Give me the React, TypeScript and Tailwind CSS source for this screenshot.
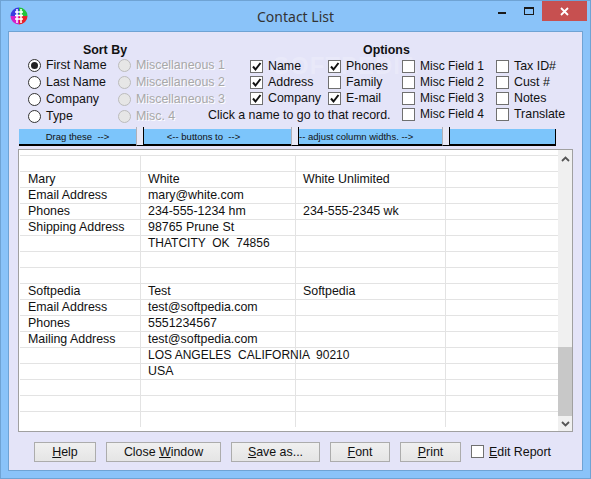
const font = "font-['Liberation_Sans',Arial,sans-serif]";

const rows = [
  ['', '', ''],
  ['Mary', 'White', 'White Unlimited'],
  ['Email Address', 'mary@white.com', ''],
  ['Phones', '234-555-1234 hm', '234-555-2345 wk'],
  ['Shipping Address', '98765 Prune St', ''],
  ['', 'THATCITY  OK  74856', ''],
  ['', '', ''],
  ['', '', ''],
  ['Softpedia', 'Test', 'Softpedia'],
  ['Email Address', 'test@softpedia.com', ''],
  ['Phones', '5551234567', ''],
  ['Mailing Address', 'test@softpedia.com', ''],
  ['', 'LOS ANGELES  CALIFORNIA  90210', ''],
  ['', 'USA', ''],
  ['', '', ''],
  ['', '', ''],
  ['', '', ''],
];

const Radio = ({ label, checked, disabled }: { label: string; checked?: boolean; disabled?: boolean }) => (
  <div className="flex h-[17px] items-center gap-[5px]">
    <span
      className={`flex h-[13px] w-[13px] items-center justify-center rounded-full border ${
        disabled ? 'border-[#bcbcbc] bg-[#e6e6e6]' : 'border-[#333] bg-white'
      }`}
    >
      {checked && <span className="h-[7px] w-[7px] rounded-full bg-[#222]" />}
    </span>
    <span className={disabled ? 'text-[#a8a8a8] [text-shadow:1px_1px_0_#fff]' : 'text-[#111]'}>{label}</span>
  </div>
);

const Check = ({ label, checked, className }: { label: string; checked?: boolean; className?: string }) => (
  <div className={`flex h-4 items-center gap-[5px] ${className ?? ''}`}>
    <span className="flex h-[13px] w-[13px] items-center justify-center border border-[#707070] bg-white">
      {checked && (
        <svg width="11" height="11" viewBox="0 0 11 11">
          <path d="M2 5.5 L4.5 8.5 L9.5 2" fill="none" stroke="#111" strokeWidth="2" />
        </svg>
      )}
    </span>
    <span className="text-[#111]">{label}</span>
  </div>
);

const Handle = () => (
  <div className="z-10 -mt-[2px] h-[19px] w-[8px] shrink-0 border-x border-b border-l-[#b0b0b8] border-r-black border-b-black bg-[#e8e8f6]" />
);

const WinButton = ({ width, children }: { width: string; children: React.ReactNode }) => (
  <button
    className={`h-5 ${width} border border-[#acacac] bg-gradient-to-b from-[#f0f0f0] to-[#e5e5e5] text-center text-[#111]`}
  >
    {children}
  </button>
);

const AppIcon = () => (
  <svg width="18" height="18" viewBox="0 0 18 18">
    <path d="M9 9 L9 0.5 A8.5 8.5 0 0 1 17.5 9 Z" fill="#21c43a" />
    <path d="M9 9 L17.5 9 A8.5 8.5 0 0 1 9 17.5 Z" fill="#e8202a" />
    <path d="M9 9 L9 17.5 A8.5 8.5 0 0 1 0.5 9 Z" fill="#d41fc8" />
    <path d="M9 9 L0.5 9 A8.5 8.5 0 0 1 9 0.5 Z" fill="#3a3ae0" />
    <path d="M7 2 V16 M11 2 V16 M5 5 H13 M5 8.5 H13 M5 12 H13" stroke="#fff" strokeWidth="1.5" fill="none" />
  </svg>
);

export default function App() {
  return (
    <div className={`${font} flex h-[479px] w-[591px] flex-col overflow-hidden border border-[#6fa3d4] bg-[#8ac3f9] text-[12.4px]`}>
      {/* title bar */}
      <div className="relative flex h-[30px] shrink-0 items-center justify-center">
        <span className="absolute left-[9px] top-[6px]">
          <AppIcon />
        </span>
        <span className="font-['Noto_Sans',sans-serif] text-[14px] text-[#333]">Contact List</span>
        <div className="absolute right-[3px] top-0 flex items-start">
          <div className="flex h-[19px] w-[28px] items-center justify-center pt-[5px]">
            <span className="h-[2px] w-[8px] bg-[#1a1a1a]" />
          </div>
          <div className="flex h-[19px] w-[26px] items-center justify-center">
            <span className="h-[8px] w-[10px] border border-t-2 border-[#1a1a1a]" />
          </div>
          <div className="flex h-[20px] w-[45px] items-center justify-center bg-[#c75050]">
            <svg width="9" height="9" viewBox="0 0 9 9">
              <path d="M1 1 L8 8 M8 1 L1 8" stroke="#fff" strokeWidth="1.8" />
            </svg>
          </div>
        </div>
      </div>

      {/* client area */}
      <div className="mx-[7px] flex h-[440px] flex-col border border-[#6fa3d4] bg-[#e4e4f8] pl-[9px] pr-[10px]">
        <div className="flex h-[97px] shrink-0 pt-[11px]">
          {/* sort by */}
          <div className="w-[232px] shrink-0">
            <div className="ml-[10px] h-[14px] w-[154px] text-center font-bold leading-[14px] text-[#111]">Sort By</div>
            <div className="grid w-[232px] grid-cols-[90px_1fr] pl-[10px]">
              <Radio label="First Name" checked />
              <Radio label="Miscellaneous 1" disabled />
              <Radio label="Last Name" />
              <Radio label="Miscellaneous 2" disabled />
              <Radio label="Company" />
              <Radio label="Miscellaneous 3" disabled />
              <Radio label="Type" />
              <Radio label="Misc. 4" disabled />
            </div>
          </div>
          {/* options */}
          <div className="relative flex-1">
            <span className="absolute left-[23px] top-[5px] text-[24px] font-bold tracking-[1px] text-white/20">SOFTPEDIA</span>
            <div className="relative ml-[113px] h-[15px] w-[44px] whitespace-nowrap text-center font-bold leading-[15px] text-[#111]">Options</div>
            <div className="relative grid grid-cols-[78px_74px_94px_1fr]">
              <Check label="Name" checked />
              <Check label="Phones" checked />
              <Check label="Misc Field 1" className="text-[12px]" />
              <Check label="Tax ID#" />
              <Check label="Address" checked />
              <Check label="Family" />
              <Check label="Misc Field 2" className="text-[12px]" />
              <Check label="Cust #" />
              <Check label="Company" checked />
              <Check label="E-mail" checked />
              <Check label="Misc Field 3" className="text-[12px]" />
              <Check label="Notes" />
              <div className="col-span-2 -ml-[42px] flex h-4 items-center whitespace-nowrap pt-[3px] text-[#111]">
                Click a name to go to that record.
              </div>
              <Check label="Misc Field 4" className="text-[12px]" />
              <Check label="Translate" />
            </div>
          </div>
        </div>

        {/* column drag bar */}
        <div className="ml-px flex h-[17px] w-[537px] shrink-0 border-b-2 border-r border-b-black border-r-black bg-[#7cc5fb] text-[9.5px] leading-[15px] text-[#111]">
          <div className="w-[117px] text-center">Drag these&nbsp; --&gt;</div>
          <Handle />
          <div className="w-[147px] pr-7 text-center">&lt;-- buttons to&nbsp; --&gt;</div>
          <Handle />
          <div className="w-[143px] whitespace-nowrap">-- adjust column widths. --&gt;</div>
          <Handle />
        </div>

        {/* report grid */}
        <div className="mt-[3px] flex h-[283px] w-[555px] shrink-0 border border-[#a0a0a0] bg-white">
          <div className="w-[539px] overflow-hidden pl-px pt-[5px]">
            {rows.map((row, i) => (
              <div key={i} className="flex h-4 border-t border-[#e3e3e3] leading-[14px] text-[#111]">
                <div className="w-[121px] shrink-0 border-r border-[#e3e3e3] pl-[8px]">{row[0]}</div>
                <div
                  className={`w-[155px] shrink-0 whitespace-pre border-r border-[#e3e3e3] pl-[7px] ${
                    /[A-Z]{4}/.test(row[1]) ? 'text-[12px]' : ''
                  }`}
                >
                  {row[1]}
                </div>
                <div className="w-[150px] shrink-0 border-r border-[#e3e3e3] pl-[7px]">{row[2]}</div>
                <div className="flex-1" />
              </div>
            ))}
          </div>
          <div className="flex flex-1 flex-col bg-[#f0f0f0]">
            <div className="flex h-[17px] items-center justify-center">
              <svg width="9" height="6" viewBox="0 0 9 6">
                <path d="M1 5 L4.5 1.5 L8 5" fill="none" stroke="#555" strokeWidth="1.8" />
              </svg>
            </div>
            <div className="mt-auto h-[69px] w-full bg-[#c8c8c8]" />
            <div className="flex h-[15px] items-center justify-center">
              <svg width="9" height="6" viewBox="0 0 9 6">
                <path d="M1 1 L4.5 4.5 L8 1" fill="none" stroke="#555" strokeWidth="1.8" />
              </svg>
            </div>
          </div>
        </div>

        {/* footer */}
        <div className="mt-[10px] flex items-center gap-[10px] pl-[16px]">
          <WinButton width="w-[62px]"><u>H</u>elp</WinButton>
          <WinButton width="w-[115px]">Close <u>W</u>indow</WinButton>
          <WinButton width="w-[89px]"><u>S</u>ave as...</WinButton>
          <WinButton width="w-[60px]"><u>F</u>ont</WinButton>
          <WinButton width="w-[61px]"><u>P</u>rint</WinButton>
          <div className="flex items-center gap-[5px]">
            <span className="h-[13px] w-[13px] border border-[#707070] bg-white" />
            <span className="text-[#111]"><u>E</u>dit Report</span>
          </div>
        </div>
      </div>
    </div>
  );
}
